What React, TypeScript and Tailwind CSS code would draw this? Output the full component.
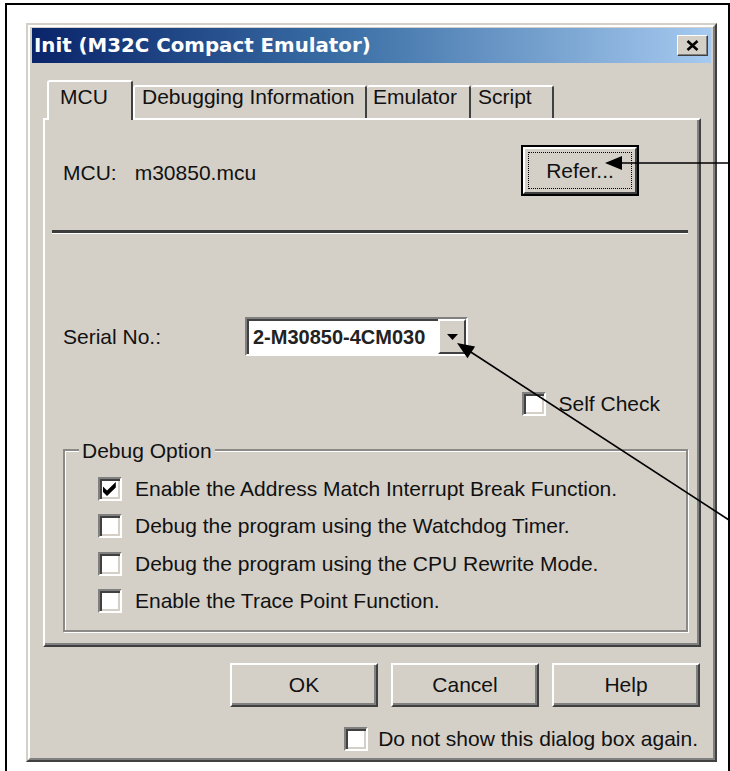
import React from "react";

function Check({ checked = false }: { checked?: boolean }) {
  return (
    <div className="w-[24px] h-[24px] shrink-0 bg-white border-2 border-t-[#808080] border-l-[#808080] border-r-white border-b-white shadow-[inset_2px_2px_0_#404040,inset_-2px_-2px_0_#d4d0c8] flex items-center justify-center">
      {checked && (
        <svg width="14" height="14" viewBox="0 0 7 7">
          <path d="M0 2.2 L2 4.2 L6.4 0 L6.4 2.8 L2 7 L0 5 Z" fill="#000" />
        </svg>
      )}
    </div>
  );
}

function Btn({ label }: { label: string }) {
  return (
    <div className="w-[148px] h-[44px] flex items-center justify-center border-2 border-t-white border-l-white border-r-[#404040] border-b-[#404040] shadow-[inset_-2px_-2px_0_#808080] text-[21px] leading-[24px] text-[#111]">
      {label}
    </div>
  );
}

export default function App() {
  const rows: { label: string; checked: boolean }[] = [
    { label: "Enable the Address Match Interrupt Break Function.", checked: true },
    { label: "Debug the program using the Watchdog Timer.", checked: false },
    { label: "Debug the program using the CPU Rewrite Mode.", checked: false },
    { label: "Enable the Trace Point Function.", checked: false },
  ];
  return (
    <div className="relative w-[730px] h-[771px] bg-white overflow-hidden pl-[5px] pt-[3px] font-['Liberation_Sans',Arial,sans-serif]">
      <div className="w-[725px] h-[800px] border-l-2 border-t-2 border-r-2 border-black pl-[19px] pt-[18px]">
        {/* Dialog */}
        <div className="w-[691px] h-[739px] bg-[#d4d0c8] border-2 border-t-[#d4d0c8] border-l-[#d4d0c8] border-r-[#404040] border-b-[#404040]">
          <div className="h-full border-2 border-t-white border-l-white border-r-[#808080] border-b-[#808080] px-[2px] pt-[1px] flex flex-col">
            {/* Title bar */}
            <div className="h-[35px] shrink-0 flex items-center justify-between pl-[2px] pr-[3px] bg-[linear-gradient(to_right,#0a246a,#3a6ea5_45%,#a6caf0)]">
              <span className="text-white font-bold text-[19.8px] leading-[24px] font-['DejaVu_Sans',sans-serif]">
                Init (M32C Compact Emulator)
              </span>
              <div className="w-[31px] h-[21px] bg-[#d4d0c8] border-[1.5px] border-t-white border-l-white border-r-[#404040] border-b-[#404040] shadow-[inset_-1px_-1px_0_#808080] flex items-center justify-center">
                <svg width="13" height="11" viewBox="0 0 13 11">
                  <path d="M1.5 1 L11.5 10 M11.5 1 L1.5 10" stroke="#000" strokeWidth="2.6" />
                </svg>
              </div>
            </div>

            {/* Content */}
            <div className="pl-[11px] pr-[10px] flex flex-col">
              {/* Tabs */}
              <div className="mt-[17px] h-[38px] flex items-end pl-[4px] text-[21px] leading-[20px] text-[#111]">
                <div className="relative z-10 w-[86px] h-[40px] -mb-[2px] bg-[#d4d0c8] border-l-2 border-t-2 border-r-2 border-l-white border-t-white border-r-[#404040] rounded-t-[3px] pt-[5px] pl-[11px]">
                  MCU
                </div>
                <div className="w-[234px] h-[33px] border-l-2 border-t-2 border-r-2 border-l-white border-t-white border-r-[#404040] rounded-t-[3px] pl-[7px]">
                  Debugging Information
                </div>
                <div className="w-[104px] h-[33px] border-t-2 border-r-2 border-t-white border-r-[#404040] rounded-t-[3px] pl-[6px]">
                  Emulator
                </div>
                <div className="w-[83px] h-[33px] border-t-2 border-r-2 border-t-white border-r-[#404040] rounded-t-[3px] pl-[7px]">
                  Script
                </div>
              </div>

              {/* Panel */}
              <div className="h-[529px] border-2 border-l-white border-t-white border-r-[#404040] border-b-[#404040] shadow-[inset_-2px_-2px_0_#808080] flex flex-col text-[21px] leading-[24px] text-[#111]">
                <div className="mt-[25px] h-[51px] flex items-center justify-between pl-[18px] pr-[60px]">
                  <div className="flex items-center pt-[4px]">
                    <span>MCU:</span>
                    <span className="ml-[18px]">m30850.mcu</span>
                  </div>
                  <div className="w-[118px] h-[51px] border-2 border-black">
                    <div className="h-full border-2 border-t-white border-l-white border-r-[#404040] border-b-[#404040] p-[3px]">
                      <div className="h-full border-[1.5px] border-dotted border-black flex items-center justify-center">
                        Refer...
                      </div>
                    </div>
                  </div>
                </div>

                <div className="mt-[34px] ml-[7px] mr-[11px] h-[3px] bg-[#3c3c3c] shadow-[0_1px_0_#ffffff]" />

                <div className="mt-[84px] h-[39px] flex items-center pl-[18px]">
                  <span className="w-[182px]">Serial No.:</span>
                  <div className="w-[223px] h-[39px] bg-white border-2 border-t-[#808080] border-l-[#808080] border-r-white border-b-white shadow-[inset_2px_2px_0_#404040] flex items-center">
                    <span className="flex-1 pl-[6px] font-bold text-[20px] text-[#222]">2-M30850-4CM030</span>
                    <div className="w-[28px] h-full bg-[#d4d0c8] border-2 border-t-white border-l-white border-r-[#404040] border-b-[#404040] flex items-center justify-center">
                      <svg width="11" height="6" viewBox="0 0 11 6">
                        <path d="M0 0 L11 0 L5.5 6 Z" fill="#000" />
                      </svg>
                    </div>
                  </div>
                </div>

                <div className="mt-[35px] h-[26px] flex items-center justify-end pr-[39px] gap-[12px]">
                  <Check />
                  <span>Self Check</span>
                </div>

                <div className="relative mt-[32px] ml-[18px] mr-[11px] border-2 border-[#8c8a86] shadow-[inset_1px_1px_0_#ffffff,1px_1px_0_#ffffff] pt-[19px] pb-[10px] flex flex-col">
                  <span className="absolute -top-[12px] left-[14px] px-[3px] bg-[#d4d0c8]">Debug Option</span>
                  {rows.map((r) => (
                    <div key={r.label} className="h-[37.5px] flex items-center pl-[33px] gap-[13px]">
                      <Check checked={r.checked} />
                      <span>{r.label}</span>
                    </div>
                  ))}
                </div>
              </div>

              {/* Buttons */}
              <div className="mt-[16px] flex justify-end gap-[13px] pr-[1px]">
                <Btn label="OK" />
                <Btn label="Cancel" />
                <Btn label="Help" />
              </div>

              <div className="mt-[21px] h-[22px] flex items-center justify-end gap-[10px] pr-[3px] text-[21px] leading-[24px] text-[#111]">
                <Check />
                <span>Do not show this dialog box again.</span>
              </div>
            </div>
          </div>
        </div>
      </div>

      {/* Annotation arrows */}
      <svg className="absolute left-0 top-0 pointer-events-none" width="730" height="771" viewBox="0 0 730 771">
        <line x1="620" y1="163" x2="730" y2="163" stroke="#000" strokeWidth="1.6" />
        <polygon points="605,163 622,156 622,170" fill="#000" />
        <line x1="470" y1="351.5" x2="729" y2="520" stroke="#000" strokeWidth="1.6" />
        <polygon points="457,343 467.5,358.2 475.1,346.4" fill="#000" />
      </svg>
    </div>
  );
}
